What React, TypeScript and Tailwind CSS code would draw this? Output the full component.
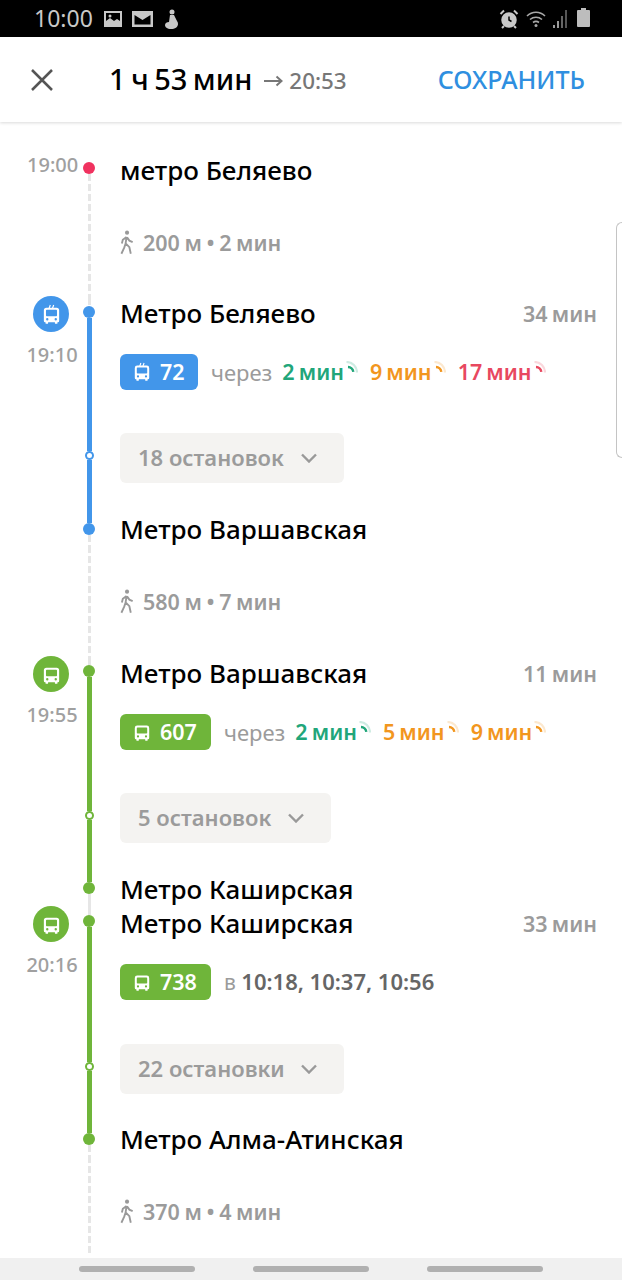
import React from "react";

const DASHED = "bg-[repeating-linear-gradient(to_bottom,#e6e6e6_0,#e6e6e6_7px,transparent_7px,transparent_10px)]";

const BusIcon = ({ trolley, className }: { trolley?: boolean; className: string }) => (
    <svg viewBox="0 0 20 24" className={className} fill="#fff">
        {trolley && <path d="M7.2 4.6 8.6 .8M11.2 4.6 12.6 .8" stroke="#fff" strokeWidth="1.4" fill="none" />}
        <path
            fillRule="evenodd"
            d="M4 4h12a3 3 0 0 1 3 3v12.5a1.5 1.5 0 0 1-1.5 1.5H17v1.2a.8.8 0 0 1-.8.8h-1.4a.8.8 0 0 1-.8-.8V21H6v1.200a.8.8 0 0 1-.8.8H3.800a.8.8 0 0 1-.8-.8V21h-.5A1.500 1.500 0 0 1 1 19.500V7a3 3 0 0 1 3-3Zm.5 2.500a1 1 0 0 0-1 1v5.500a1 1 0 0 0 1 1h11a1 1 0 0 0 1-1V7.500a1 1 0 0 0-1-1h-11ZM5 16.200a1.400 1.400 0 1 0 0 2.800 1.400 1.400 0 0 0 0-2.800Zm10 0a1.400 1.400 0 1 0 0 2.800 1.400 1.400 0 0 0 0-2.800Z"
        />
    </svg>
);

const WalkIcon = () => (
    <svg viewBox="0 0 16 26" className="w-[15px] h-[25px]" fill="none" stroke="#999" strokeWidth="2">
        <circle cx="7.500" cy="2.500" r="2.200" fill="#999" stroke="none" />
        <path d="M7 7 6 14l4 4 1.500 7M6 14l-1.500 4.500L1.500 25M7 7l-4 3-1 4M7.500 7.500l2.500 3.500 3.500 1.500" />
    </svg>
);

const Arc = ({ color }: { color: string }) => (
    <svg viewBox="0 0 12 12" className="w-[12px] h-[12px] ml-[2px] mb-[10px]" fill="none">
        <path d="M.5 1A10.500 10.500 0 0 1 11 11.500" stroke={color} strokeOpacity="0.22" strokeWidth="2.200" />
        <path d="M2 6A5.500 5.500 0 0 1 7.300 10.800" stroke={color} strokeWidth="2.400" />
    </svg>
);

const Eta = ({ text, color, arc }: { text: string; color: string; arc: string }) => (
    <span className={`flex items-center font-semibold ${color}`}>
        <span>{text}</span>
        <Arc color={arc} />
    </span>
);

const Chevron = () => (
    <svg viewBox="0 0 16 10" className="w-[16px] h-[10px]" fill="none" stroke="#999" strokeWidth="2.400">
        <path d="M1 1.500 8 8.500l7-7" />
    </svg>
);

const Title = ({ children }: { children: React.ReactNode }) => (
    <div className="h-[32px] leading-[31px] text-[26px] font-medium text-black">{children}</div>
);

const WalkRow = ({ text }: { text: string }) => (
    <div className="flex items-center gap-[8px] h-[30px] mt-[40px] text-[21.5px] font-semibold text-[#9b9b9b] [word-spacing:-1px]">
        <WalkIcon />
        <span className="leading-[27px]">{text}</span>
    </div>
);

const Dot = ({ color }: { color: string }) => <div className={`w-[12px] h-[12px] rounded-full shrink-0 ${color}`} />;

const WalkSection = ({ text, className }: { text: string; className: string }) => (
    <section className="flex">
        <div className="w-[80px]" />
        <div className="w-[18px] flex justify-center">
            <div className={`w-[3px] ${DASHED}`} />
        </div>
        <div className={`pl-[22px] ${className}`}>
            <WalkRow text={text} />
        </div>
    </section>
);

type Ride = {
    trolley?: boolean;
    time: string;
    from: string;
    to: string;
    duration: string;
    number: string;
    line: string;
    ring: string;
    chipWidth: string;
    buttonWidth: string;
    buttonTop: string;
    titleTop: string;
    stops: string;
    contentClass: string;
    topPiece: string;
    bottomPiece: string;
    midClass: string;
    info: React.ReactNode;
};

const RideSection = ({ ride }: { ride: Ride }) => (
    <section className="flex">
        <div className="w-[80px] pl-[27px]">
            <div className="w-[50px] flex flex-col items-center -mt-[2px]">
                <div className={`w-[36px] h-[36px] -ml-[2px] rounded-full flex items-center justify-center ${ride.line}`}>
                    <BusIcon trolley={ride.trolley} className="w-[17px] h-[21px]" />
                </div>
                <div className="mt-[11px] text-[20px] leading-[24px] font-medium text-[#a0a0a0]">{ride.time}</div>
            </div>
        </div>
        <div className="w-[18px] flex flex-col items-center">
            <div className={`w-[3px] ${ride.topPiece}`} />
            <Dot color={ride.line} />
            <div className={`w-[5px] ${ride.midClass} ${ride.line}`} />
            <div className={`w-[9px] h-[9px] rounded-full border-2 bg-white shrink-0 ${ride.ring}`} />
            <div className={`w-[5px] flex-1 ${ride.line}`} />
            <Dot color={ride.line} />
            <div className={`w-[3px] ${ride.bottomPiece}`} />
        </div>
        <div className={`flex-1 pl-[22px] pr-[25px] ${ride.contentClass}`}>
            <div className="flex justify-between">
                <Title>{ride.from}</Title>
                <div className="leading-[32px] text-[21.5px] font-semibold text-[#9b9b9b] [word-spacing:-1.5px]">{ride.duration}</div>
            </div>
            <div className="flex items-center mt-[24px] h-[36px]">
                <div className={`h-[36px] ${ride.chipWidth} rounded-[6px] flex items-center gap-[10px] pl-[14px] text-white text-[21.5px] font-semibold ${ride.line}`}>
                    <BusIcon trolley={ride.trolley} className="w-[16px] h-[20px]" />
                    <span>{ride.number}</span>
                </div>
                {ride.info}
            </div>
            <button className={`flex items-center justify-between h-[50px] ${ride.buttonWidth} ${ride.buttonTop} pl-[18px] pr-[27px] rounded-[6px] bg-[#f4f3f1] text-[22px] font-semibold text-[#9b9b9b]`}>
                <span className="leading-[26px] pb-[2px]">{ride.stops}</span>
                <Chevron />
            </button>
            <div className={ride.titleTop}>
                <Title>{ride.to}</Title>
            </div>
        </div>
    </section>
);

const Through = ({ children }: { children: React.ReactNode }) => (
    <div className="flex items-center gap-[12px] ml-[13px] text-[21.5px] [word-spacing:-1.5px]">
        <span className="text-[22px] text-[#9b9b9b] -mr-[2px]">через</span>
        {children}
    </div>
);

const GREEN = "text-[#21a67a]";
const ORANGE = "text-[#f2961e]";
const RED = "text-[#e8485f]";

const rides: Ride[] = [
    {
        trolley: true,
        time: "19:10",
        from: "Метро Беляево",
        to: "Метро Варшавская",
        duration: "34 мин",
        number: "72",
        line: "bg-[#4296ea]",
        ring: "border-[#4296ea]",
        chipWidth: "w-[78px]",
        buttonWidth: "w-[224px]",
        buttonTop: "mt-[43px]",
        titleTop: "mt-[31px]",
        stops: "18 остановок",
        contentClass: "",
        topPiece: `h-[8px] ${DASHED}`,
        bottomPiece: `h-[11px] ${DASHED}`,
        midClass: "h-[133px]",
        info: (
            <Through>
                <Eta text="2 мин" color={GREEN} arc="#21a67a" />
                <Eta text="9 мин" color={ORANGE} arc="#f2961e" />
                <Eta text="17 мин" color={RED} arc="#e8485f" />
            </Through>
        ),
    },
    {
        time: "19:55",
        from: "Метро Варшавская",
        to: "Метро Каширская",
        duration: "11 мин",
        number: "607",
        line: "bg-[#6fb53a]",
        ring: "border-[#6fb53a]",
        chipWidth: "w-[91px]",
        buttonWidth: "w-[211px]",
        buttonTop: "mt-[43px]",
        titleTop: "mt-[31px]",
        stops: "5 остановок",
        contentClass: "pb-[2px]",
        topPiece: `h-[7px] ${DASHED}`,
        bottomPiece: "h-[14px] bg-[#e6e6e6]",
        midClass: "h-[134px]",
        info: (
            <Through>
                <Eta text="2 мин" color={GREEN} arc="#21a67a" />
                <Eta text="5 мин" color={ORANGE} arc="#f2961e" />
                <Eta text="9 мин" color={ORANGE} arc="#f2961e" />
            </Through>
        ),
    },
    {
        time: "20:16",
        from: "Метро Каширская",
        to: "Метро Алма-Атинская",
        duration: "33 мин",
        number: "738",
        line: "bg-[#6fb53a]",
        ring: "border-[#6fb53a]",
        chipWidth: "w-[91px]",
        buttonWidth: "w-[224px]",
        buttonTop: "mt-[44px]",
        titleTop: "mt-[30px]",
        stops: "22 остановки",
        contentClass: "",
        topPiece: "h-[7px] bg-[#e6e6e6]",
        bottomPiece: `h-[11px] ${DASHED}`,
        midClass: "h-[135px]",
        info: (
            <div className="ml-[13px] text-[21px] text-[#9b9b9b]">
                в <span className="text-[22px] font-semibold text-[#666]">10:18, 10:37, 10:56</span>
            </div>
        ),
    },
];

const StatusBar = () => (
    <div className="h-[37px] bg-black flex items-center justify-between pl-[34px] pr-[32px] text-[#c8c8c8]">
        <div className="flex items-center">
            <span className="text-[23px] leading-none">10:00</span>
            <svg viewBox="0 0 18 16" className="w-[18px] h-[16px] ml-[11px]" fill="#c8c8c8">
                <path fillRule="evenodd" d="M0 0h18v16H0ZM2 2v8l4-3 4 3 3-2 3 2V2Z" />
                <circle cx="6" cy="5" r="1.500" />
            </svg>
            <svg viewBox="0 0 21 16" className="w-[21px] h-[16px] ml-[10px]" fill="#c8c8c8">
                <path fillRule="evenodd" d="M0 0h21v16H0ZM2.500 4v9.500h16V4l-8 5Z" />
            </svg>
            <svg viewBox="0 0 15 20" className="w-[15px] h-[20px] ml-[11px]" fill="#c8c8c8">
                <circle cx="8" cy="3" r="2.500" />
                <path d="M6 6h4l3 6a4 4 0 0 1 1 3c0 3-3 5-7 5s-6-2-6-4c0-2 2-3 4-3Z" />
            </svg>
        </div>
        <div className="flex items-center gap-[7px]">
            <svg viewBox="0 0 20 20" className="w-[20px] h-[20px]" fill="#c8c8c8" stroke="#c8c8c8">
                <circle cx="10" cy="11" r="6.500" strokeWidth="2.500" />
                <path d="M10 7.500V11l2.500 1.500" stroke="#000" strokeWidth="1.500" fill="none" />
                <path d="M1.500 5 5 1.500M18.500 5 15 1.500M5 17l-2 2M15 17l2 2" strokeWidth="2" />
            </svg>
            <svg viewBox="0 0 20 18" className="w-[20px] h-[18px]" fill="none" stroke="#a8a8a8" strokeWidth="1.600">
                <path d="M1 6c5-5 13-5 18 0M4 9.500c3.500-3 8.500-3 12 0M7 12.500c2-1.500 4-1.500 6 0" />
                <circle cx="10" cy="15.500" r="1.500" fill="#a8a8a8" stroke="none" />
            </svg>
            <div className="flex items-end gap-[2px] h-[18px] w-[17px]">
                <div className="w-[2px] h-[3px] bg-[#9a9a9a]" />
                <div className="w-[2px] h-[7px] bg-[#9a9a9a]" />
                <div className="w-[2px] h-[12px] bg-[#666]" />
                <div className="w-[2px] h-[18px] bg-[#555]" />
            </div>
            <div className="relative w-[13px] h-[17px] bg-[#bdbdbd] rounded-[1px]">
                <div className="absolute -top-[2px] left-[4px] w-[5px] h-[2px] bg-[#bdbdbd]" />
            </div>
        </div>
    </div>
);

const Header = () => (
    <header className="h-[85px] bg-white flex items-center pl-[31px] pr-[37px] shadow-[0_1px_3px_rgba(0,0,0,0.15)] relative">
        <svg viewBox="0 0 22 22" className="w-[22px] h-[22px]" fill="none" stroke="#555" strokeWidth="2.500">
            <path d="M1 1l20 20M21 1 1 21" />
        </svg>
        <div className="ml-[56px] text-[29px] leading-[38px] pb-[2px] font-medium text-black [word-spacing:-2px]">1 ч 53 мин</div>
        <div className="ml-[12px] flex items-center gap-[6px] text-[22.4px] font-medium text-[#777] pt-[3px]">
            <svg viewBox="0 0 19 12" className="w-[19px] h-[12px]" fill="none" stroke="#777" strokeWidth="2">
                <path d="M0 6h17M12.500 1.500 17.500 6l-5 4.500" />
            </svg>
            <span>20:53</span>
        </div>
        <div className="ml-auto text-[25px] font-medium text-[#2f8fe0]">СОХРАНИТЬ</div>
    </header>
);

const App: React.FC = () => {
    return (
        <div className="relative w-[622px] h-[1280px] bg-white overflow-hidden font-['Noto_Sans',sans-serif] flex flex-col">
            <StatusBar />
            <Header />
            <main className="flex-1">
                <section className="flex">
                    <div className="w-[80px] pl-[27px] pt-[32px] text-[20px] leading-[22px] font-medium text-[#a0a0a0]">19:00</div>
                    <div className="w-[18px] flex flex-col items-center pt-[40px]">
                        <Dot color="bg-[#f0325f]" />
                        <div className={`w-[3px] flex-1 ${DASHED}`} />
                    </div>
                    <div className="pl-[22px] pt-[33px] pb-[41px]">
                        <Title>метро Беляево</Title>
                        <WalkRow text="200 м • 2 мин" />
                    </div>
                </section>
                <RideSection ride={rides[0]} />
                <WalkSection text="580 м • 7 мин" className="pb-[42px]" />
                <RideSection ride={rides[1]} />
                <RideSection ride={rides[2]} />
                <WalkSection text="370 м • 4 мин" className="pb-[29px]" />
            </main>
            <footer className="h-[22px] bg-[#f0f0f0] flex items-center justify-center gap-[58px]">
                <div className="w-[116px] h-[6px] rounded-full bg-[#b0b0b0]" />
                <div className="w-[116px] h-[6px] rounded-full bg-[#b0b0b0]" />
                <div className="w-[116px] h-[6px] rounded-full bg-[#b0b0b0]" />
            </footer>
            <div className="absolute right-0 top-[222px] w-[6px] h-[236px] border border-r-0 border-[#c4c4c4] rounded-l-[6px]" />
        </div>
    );
};

export default App;
